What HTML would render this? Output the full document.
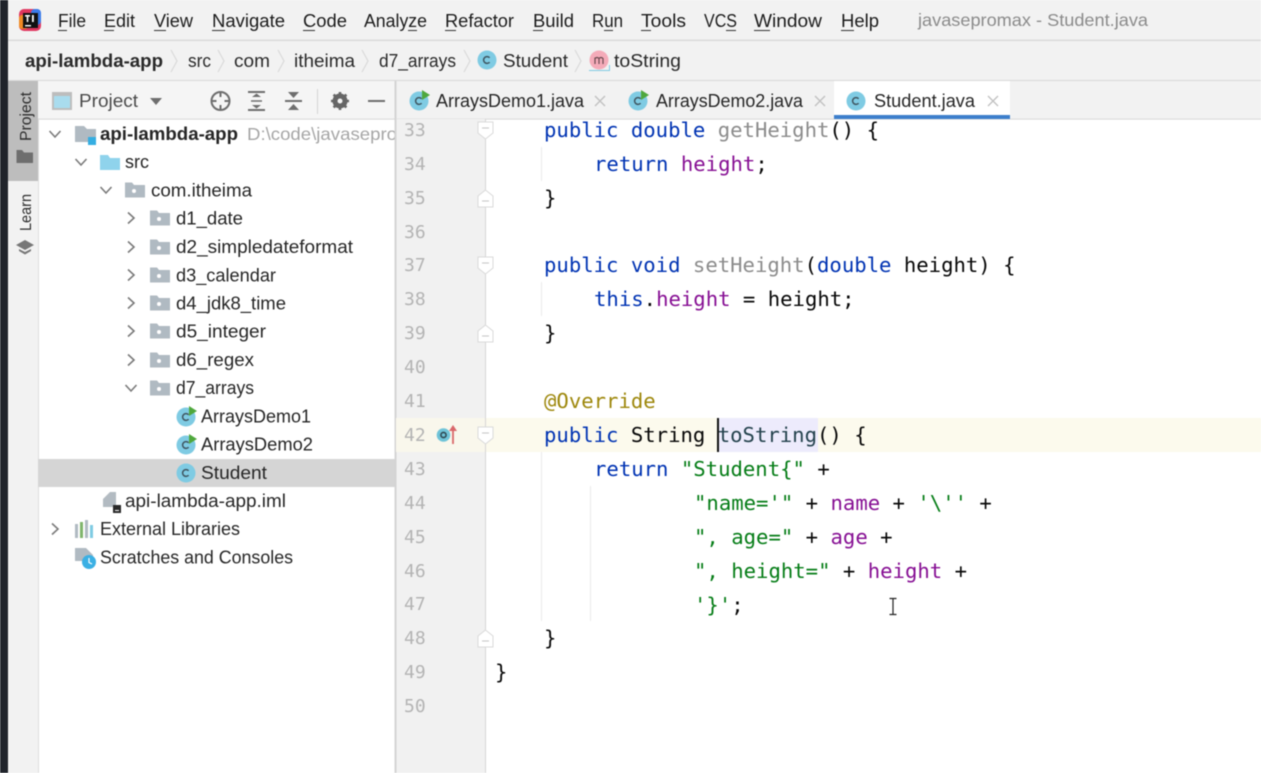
<!DOCTYPE html>
<html><head><meta charset="utf-8"><title>javasepromax - Student.java</title>
<style>
html,body{margin:0;padding:0;background:#fff;width:1261px;height:773px;overflow:hidden}
svg{display:block;filter:blur(.45px)}
text{font-family:"Liberation Sans",sans-serif;white-space:pre}
.m{font-size:18px;fill:#1c1c1c}
.b{font-size:18px;fill:#2a2a2a}
.t{font-size:18px;fill:#262626}
.c{font-family:"DejaVu Sans Mono","Liberation Mono",monospace;font-size:20.62px;fill:#080808}
.n{font-family:"DejaVu Sans Mono","Liberation Mono",monospace;font-size:18px;fill:#b4b4b4}
.k{fill:#0033b3}.f{fill:#871094}.s{fill:#067d17}.g{fill:#8c8c8c}.a{fill:#9e880d}.h{fill:#24424d}
</style></head><body>
<svg width="1261" height="773" viewBox="0 0 1261 773" xmlns="http://www.w3.org/2000/svg">
<defs>
<g id="cls"><circle r="9.5" fill="#7fcbe3"/><path d="M2.6-2.2A3.4 3.4 0 1 0 2.6 2.2" fill="none" stroke="#3f5560" stroke-width="1.5"/></g>
<g id="run"><use href="#cls"/><path d="M3-11L11-6L3-1Z" fill="#4fa83d"/></g>
<g id="pkg"><path d="M-10-7.5H-3L-1-5H10V7.5H-10Z" fill="#b0bac2"/><circle cx="-1" cy="1" r="2" fill="#fff"/></g>
<path id="dn" d="M-5.5-3L0 3L5.5-3" fill="none" stroke="#7a7a7a" stroke-width="1.6"/>
<path id="rt" d="M-3-5.5L3 0L-3 5.5" fill="none" stroke="#7a7a7a" stroke-width="1.6"/>
<path id="cv" d="M-3-11L3 0L-3 11" fill="none" stroke="#dadada" stroke-width="1.2"/>
<g id="fo"><path d="M-7.5-9H7.5V2L0 8L-7.5 2Z" fill="#fff" stroke="#dadada"/><path d="M-3.5-3H3.5" stroke="#c4c4c4"/></g>
<g id="fc"><path d="M-7.5 9H7.5V-2L0-8L-7.5-2Z" fill="#fff" stroke="#dadada"/><path d="M-3.5 3H3.5" stroke="#c4c4c4"/></g>
<path id="x" d="M-5-5L5 5M5-5L-5 5" stroke="#c2c2c2" stroke-width="1.4"/>
</defs>

<!-- base -->
<rect width="1261" height="773" fill="#fff"/>
<rect width="1261" height="81" fill="#f2f2f2"/>
<rect x="0" y="39.5" width="1261" height="1.6" fill="#dcdcdc"/>
<rect x="0" y="80" width="1261" height="1.6" fill="#d8d8d8"/>
<rect x="8" y="81" width="30" height="692" fill="#f2f2f2"/>
<rect x="38" y="81" width="1" height="692" fill="#dedede"/>
<rect x="38" y="81" width="358" height="38" fill="#f5f5f5"/>
<rect x="38" y="118.5" width="358" height="1.2" fill="#dcdcdc"/>
<rect x="396" y="81" width="865" height="38" fill="#f2f2f2"/>
<rect x="396" y="118.5" width="865" height="1.2" fill="#dcdcdc"/>
<rect x="0" y="0" width="8" height="773" fill="#20242b"/>

<!-- logo -->
<rect x="19" y="9" width="22" height="22" rx="5" fill="#e0365f"/>
<rect x="19" y="15" width="9" height="14" rx="3" fill="#f08a24"/>
<rect x="31" y="9" width="10" height="16" rx="4" fill="#3a7bea"/>
<rect x="23" y="13" width="15" height="15" fill="#111"/>
<rect x="25" y="15" width="5" height="1.6" fill="#fff"/><rect x="26.7" y="15" width="1.6" height="7" fill="#fff"/><rect x="32" y="15" width="1.8" height="7" fill="#fff"/>
<rect x="25" y="25" width="6" height="1.4" fill="#fff"/>

<!-- menu -->
<g class="m">
<text class="m" x="58" y="27" textLength="28" lengthAdjust="spacingAndGlyphs">File</text>
<text class="m" x="104" y="27" textLength="31" lengthAdjust="spacingAndGlyphs">Edit</text>
<text class="m" x="154" y="27" textLength="39" lengthAdjust="spacingAndGlyphs">View</text>
<text class="m" x="212" y="27" textLength="73" lengthAdjust="spacingAndGlyphs">Navigate</text>
<text class="m" x="303" y="27" textLength="44" lengthAdjust="spacingAndGlyphs">Code</text>
<text class="m" x="364" y="27" textLength="63" lengthAdjust="spacingAndGlyphs">Analyze</text>
<text class="m" x="445" y="27" textLength="69" lengthAdjust="spacingAndGlyphs">Refactor</text>
<text class="m" x="533" y="27" textLength="41" lengthAdjust="spacingAndGlyphs">Build</text>
<text class="m" x="592" y="27" textLength="31" lengthAdjust="spacingAndGlyphs">Run</text>
<text class="m" x="641" y="27" textLength="45" lengthAdjust="spacingAndGlyphs">Tools</text>
<text class="m" x="704" y="27" textLength="33" lengthAdjust="spacingAndGlyphs">VCS</text>
<text class="m" x="754" y="27" textLength="68" lengthAdjust="spacingAndGlyphs">Window</text>
<text class="m" x="841" y="27" textLength="38" lengthAdjust="spacingAndGlyphs">Help</text>
</g>
<text x="918" y="26" font-size="17.5" fill="#8b8b8b" textLength="230" lengthAdjust="spacingAndGlyphs">javasepromax - Student.java</text>
<g fill="#333">
<rect x="58" y="30" width="9" height="1"/><rect x="104" y="30" width="10" height="1"/><rect x="154" y="30" width="12" height="1"/><rect x="212" y="30" width="13" height="1"/><rect x="303" y="30" width="12" height="1"/><rect x="408" y="30" width="9" height="1"/><rect x="445" y="30" width="11" height="1"/><rect x="533" y="30" width="10" height="1"/><rect x="604" y="30" width="9" height="1"/><rect x="641" y="30" width="10" height="1"/><rect x="726" y="30" width="10" height="1"/><rect x="754" y="30" width="16" height="1"/><rect x="841" y="30" width="13" height="1"/>
</g>

<!-- breadcrumb -->
<text class="b" x="25" y="67" font-weight="700" fill="#1a1a1a" textLength="138" lengthAdjust="spacingAndGlyphs">api-lambda-app</text>
<text class="b" x="188" y="67" textLength="23" lengthAdjust="spacingAndGlyphs">src</text>
<text class="b" x="234" y="67" textLength="36" lengthAdjust="spacingAndGlyphs">com</text>
<text class="b" x="294" y="67" textLength="61" lengthAdjust="spacingAndGlyphs">itheima</text>
<text class="b" x="379" y="67" textLength="77" lengthAdjust="spacingAndGlyphs">d7_arrays</text>
<text class="b" x="503" y="67" textLength="65" lengthAdjust="spacingAndGlyphs">Student</text>
<text class="b" x="614" y="67" textLength="67" lengthAdjust="spacingAndGlyphs">toString</text>
<use href="#cv" x="174" y="61"/><use href="#cv" x="221" y="61"/><use href="#cv" x="281" y="61"/><use href="#cv" x="365" y="61"/><use href="#cv" x="467" y="61"/><use href="#cv" x="578" y="61"/>
<use href="#cls" x="487" y="60"/>
<circle cx="599" cy="60" r="9.5" fill="#f4abb9"/><path d="M595 64V57.5M595 58.5Q597 56.5 599 58.5V64M599 58.5Q601 56.5 603 58.5V64" fill="none" stroke="#6a4a50" stroke-width="1.2"/>
<path d="M589 70.5H609.5V65" fill="none" stroke="#7fcbe3" stroke-width="1"/>

<!-- left strip -->
<rect x="8" y="81" width="30" height="100" fill="#bdbdbd"/>
<text transform="translate(31,141) rotate(-90)" font-size="15.5" fill="#2c2c2c" textLength="49" lengthAdjust="spacingAndGlyphs">Project</text>
<path d="M16.5 150H22L24 152.500H33V163H16.5Z" fill="#6e6e6e"/>
<text transform="translate(31,231) rotate(-90)" font-size="15.5" fill="#2c2c2c" textLength="37" lengthAdjust="spacingAndGlyphs">Learn</text>
<path d="M16 245L25 240L34 245L25 250Z" fill="#777"/><path d="M19 249V251L25 254.500L31 251V249L25 252Z" fill="#777"/>

<!-- project toolbar -->
<rect x="52" y="92" width="20" height="18" fill="#bdbdbd"/><rect x="54" y="96" width="16" height="12" fill="#a9dcee"/>
<text x="79" y="107" font-size="18" fill="#4a4a4a" textLength="59" lengthAdjust="spacingAndGlyphs">Project</text>
<path d="M150 98H162L156 105Z" fill="#6e6e6e"/>
<circle cx="220.500" cy="101" r="9" fill="none" stroke="#6e6e6e" stroke-width="2"/><path d="M220.500 92V97M220.500 105V110M211.500 101H216.500M224.500 101H229.500" stroke="#6e6e6e" stroke-width="2"/>
<path d="M248 92H265M248 110H265" stroke="#6e6e6e" stroke-width="2"/><path d="M252 97L256.500 93.500L261 97ZM252 105L256.500 108.500L261 105Z" fill="#6e6e6e"/><path d="M251 101H262" stroke="#6e6e6e" stroke-width="1.500"/>
<path d="M285 101H302" stroke="#6e6e6e" stroke-width="2"/><path d="M288 92L293.500 98L299 92ZM288 110L293.500 104L299 110Z" fill="#6e6e6e"/>
<rect x="317" y="89" width="1" height="25" fill="#d4d4d4"/>
<circle cx="340" cy="101" r="5.500" fill="none" stroke="#666" stroke-width="4"/><path d="M340 92V110M331 101H349M333.600 94.600L346.400 107.400M346.400 94.600L333.600 107.400" stroke="#666" stroke-width="2.600"/><circle cx="340" cy="101" r="2.500" fill="#f5f5f5"/>
<rect x="368" y="100" width="17" height="2" fill="#6e6e6e"/>

<!-- tabs -->
<rect x="834" y="81" width="176" height="34" fill="#fff"/>
<rect x="834" y="115" width="176" height="4" fill="#3d7fcc"/>
<use href="#run" x="419" y="101"/><use href="#run" x="638" y="101"/><use href="#cls" x="856" y="101"/>
<text class="t" x="436" y="107" textLength="148" lengthAdjust="spacingAndGlyphs">ArraysDemo1.java</text>
<text class="t" x="656" y="107" textLength="147" lengthAdjust="spacingAndGlyphs">ArraysDemo2.java</text>
<text class="t" x="874" y="107" textLength="101" lengthAdjust="spacingAndGlyphs">Student.java</text>
<use href="#x" x="600" y="101"/><use href="#x" x="820" y="101"/><use href="#x" x="993" y="101"/>

<!-- tree -->
<rect x="38" y="459" width="357" height="28" fill="#d5d5d5"/>
<use href="#dn" x="55" y="134"/><use href="#dn" x="81" y="162"/><use href="#dn" x="106" y="190"/>
<use href="#rt" x="131" y="218"/><use href="#rt" x="131" y="247"/><use href="#rt" x="131" y="275"/><use href="#rt" x="131" y="303"/><use href="#rt" x="131" y="331"/><use href="#rt" x="131" y="360"/><use href="#dn" x="131" y="388"/><use href="#rt" x="55" y="529"/>

<path d="M75 126H84L87 129H96V142H75Z" fill="#b0bac2"/><rect x="88" y="137" width="8" height="8" fill="#35aee2"/>
<path d="M100 155H108L110 158H120V170H100Z" fill="#8fd3ec"/>
<use href="#pkg" x="135" y="190"/>
<use href="#pkg" x="160" y="218"/><use href="#pkg" x="160" y="247"/><use href="#pkg" x="160" y="275"/><use href="#pkg" x="160" y="303"/><use href="#pkg" x="160" y="331"/><use href="#pkg" x="160" y="360"/><use href="#pkg" x="160" y="388"/>
<use href="#run" x="186" y="417"/><use href="#run" x="186" y="445"/><use href="#cls" x="186" y="473"/>
<path d="M103 499L110 492H116V507H103Z" fill="#b3bbc2"/><rect x="113" y="505" width="8" height="8" fill="#2a2a2a"/><rect x="115" y="510" width="4" height="1" fill="#fff"/>
<rect x="75" y="524" width="3" height="14" fill="#b0bac2"/><rect x="80" y="522" width="3" height="16" fill="#7fb56c"/><rect x="85" y="520" width="3" height="18" fill="#b0bac2"/><rect x="90" y="525" width="3" height="13" fill="#7fcbe3"/>
<path d="M75 548H86L93 555V561H75Z" fill="#b0bac2"/><circle cx="89" cy="562" r="7" fill="#3bb0e4"/><path d="M89 558V562.500L92 564" fill="none" stroke="#fff" stroke-width="1.200"/>

<text class="t" x="100" y="140" font-weight="700" fill="#1c1c1c" textLength="138" lengthAdjust="spacingAndGlyphs">api-lambda-app</text>
<text x="247" y="140" font-size="17.500" fill="#a6a6a6" textLength="150" lengthAdjust="spacingAndGlyphs">D:\code\javasepro</text>
<text class="t" x="125" y="168" textLength="24" lengthAdjust="spacingAndGlyphs">src</text>
<text class="t" x="151" y="196.500" textLength="101" lengthAdjust="spacingAndGlyphs">com.itheima</text>
<text class="t" x="176" y="224.500" textLength="67" lengthAdjust="spacingAndGlyphs">d1_date</text>
<text class="t" x="176" y="253" textLength="177" lengthAdjust="spacingAndGlyphs">d2_simpledateformat</text>
<text class="t" x="176" y="281.500" textLength="100" lengthAdjust="spacingAndGlyphs">d3_calendar</text>
<text class="t" x="176" y="309.500" textLength="110" lengthAdjust="spacingAndGlyphs">d4_jdk8_time</text>
<text class="t" x="176" y="337.500" textLength="90" lengthAdjust="spacingAndGlyphs">d5_integer</text>
<text class="t" x="176" y="366" textLength="78" lengthAdjust="spacingAndGlyphs">d6_regex</text>
<text class="t" x="176" y="394" textLength="78" lengthAdjust="spacingAndGlyphs">d7_arrays</text>
<text class="t" x="201" y="422.500" textLength="110" lengthAdjust="spacingAndGlyphs">ArraysDemo1</text>
<text class="t" x="201" y="450.500" textLength="112" lengthAdjust="spacingAndGlyphs">ArraysDemo2</text>
<text class="t" x="201" y="479" textLength="66" lengthAdjust="spacingAndGlyphs">Student</text>
<text class="t" x="125" y="507" textLength="161" lengthAdjust="spacingAndGlyphs">api-lambda-app.iml</text>
<text class="t" x="100" y="535" textLength="140" lengthAdjust="spacingAndGlyphs">External Libraries</text>
<text class="t" x="100" y="563.500" textLength="193" lengthAdjust="spacingAndGlyphs">Scratches and Consoles</text>

<!-- gutter, drawn over the tree so the long project path is clipped -->
<rect x="396" y="119" width="89" height="654" fill="#f1f1f1"/>
<rect x="394.5" y="81" width="2" height="692" fill="#d4d4d4"/>
<rect x="485" y="119" width="1" height="654" fill="#d6d6d6"/>

<!-- current line -->
<rect x="396" y="418" width="89" height="34" fill="#f9f7ec"/>
<rect x="486" y="418" width="775" height="34" fill="#fcfaed"/>
<rect x="718" y="418" width="100" height="34" fill="#edebfc"/>

<!-- guides -->
<g fill="#ebebeb">
<rect x="541" y="147" width="1" height="34"/><rect x="541" y="282" width="1" height="34"/><rect x="541" y="452" width="1" height="169"/><rect x="590" y="486" width="1" height="135"/>
</g>

<!-- line numbers -->
<g>
<text class="n" x="404" y="136">33</text><text class="n" x="404" y="170">34</text><text class="n" x="404" y="204">35</text><text class="n" x="404" y="238">36</text><text class="n" x="404" y="271">37</text><text class="n" x="404" y="305">38</text><text class="n" x="404" y="339">39</text><text class="n" x="404" y="373">40</text><text class="n" x="404" y="407">41</text><text class="n" x="404" y="441">42</text><text class="n" x="404" y="475">43</text><text class="n" x="404" y="509">44</text><text class="n" x="404" y="543">45</text><text class="n" x="404" y="577">46</text><text class="n" x="404" y="610">47</text><text class="n" x="404" y="644">48</text><text class="n" x="404" y="678">49</text><text class="n" x="404" y="712">50</text>
</g>

<!-- fold -->
<use href="#fo" x="485.500" y="131"/><use href="#fc" x="485.500" y="198"/><use href="#fo" x="485.500" y="266"/><use href="#fc" x="485.500" y="333"/><use href="#fo" x="485.500" y="436"/><use href="#fc" x="485.500" y="638"/>

<!-- gutter icons -->
<circle cx="443.500" cy="435" r="6.800" fill="#6fc3d8"/><circle cx="443.500" cy="435" r="2.600" fill="none" stroke="#2f4a55" stroke-width="1.600"/>
<path d="M453 444V428" stroke="#d9676b" stroke-width="1.800"/><path d="M449 431L453 425L457 431Z" fill="#d9676b"/>

<!-- code -->
<text class="c" x="544" y="137"><tspan class="k">public double </tspan><tspan class="g">getHeight</tspan>() {</text>
<text class="c" x="594" y="171"><tspan class="k">return </tspan><tspan class="f">height</tspan>;</text>
<text class="c" x="544" y="205">}</text>
<text class="c" x="544" y="272"><tspan class="k">public void </tspan><tspan class="g">setHeight</tspan>(<tspan class="k">double</tspan> height) {</text>
<text class="c" x="594" y="306"><tspan class="k">this</tspan>.<tspan class="f">height</tspan> = height;</text>
<text class="c" x="544" y="340">}</text>
<text class="c a" x="544" y="408">@Override</text>
<text class="c" x="544" y="442"><tspan class="k">public </tspan>String <tspan class="h">toString</tspan>() {</text>
<text class="c" x="594" y="476"><tspan class="k">return </tspan><tspan class="s">"Student{"</tspan> +</text>
<text class="c" x="694" y="510"><tspan class="s">"name='"</tspan> + <tspan class="f">name</tspan> + <tspan class="s">'\''</tspan> +</text>
<text class="c" x="694" y="544"><tspan class="s">", age="</tspan> + <tspan class="f">age</tspan> +</text>
<text class="c" x="694" y="578"><tspan class="s">", height="</tspan> + <tspan class="f">height</tspan> +</text>
<text class="c" x="694" y="612"><tspan class="s">'}'</tspan>;</text>
<text class="c" x="544" y="645">}</text>
<text class="c" x="495" y="679">}</text>

<!-- caret + mouse -->
<rect x="717" y="418" width="2" height="34" fill="#111"/>
<path d="M889.500 598.500H896.500M893 598.500V614.500M889.500 614.500H896.500" stroke="#222" stroke-width="1.200" fill="none"/>
</svg>
</body></html>
